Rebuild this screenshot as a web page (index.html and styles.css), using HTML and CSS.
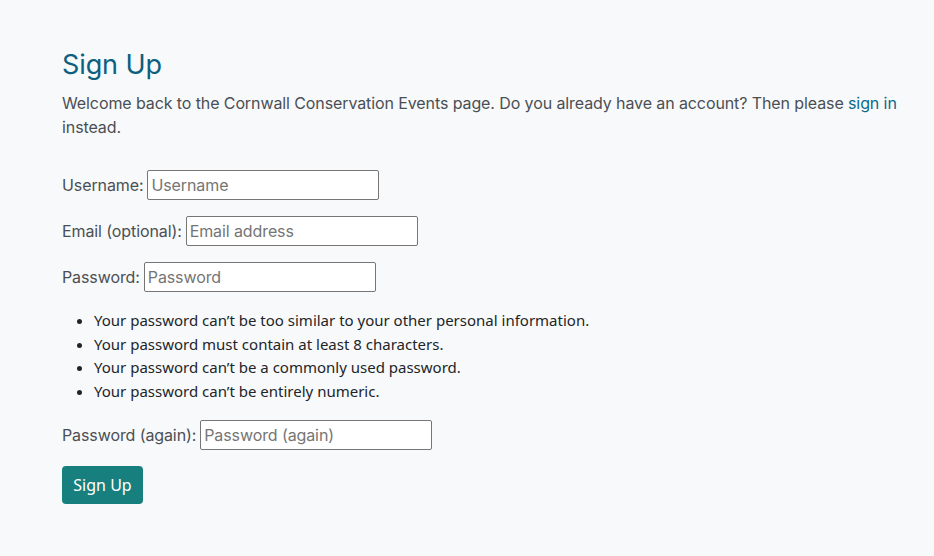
FILE: index.html
```html
<!DOCTYPE html>
<html lang="en">
<head>
<meta charset="utf-8">
<title>Sign Up</title>
<link rel="stylesheet" href="styles.css">
</head>
<body>
<main class="page">
  <h1 class="title">Sign Up</h1>
  <p class="intro">Welcome back to the Cornwall Conservation Events page. Do you already have an account? Then please <a class="link" href="#">sign in</a> instead.</p>
  <form class="signup">
    <p class="row"><label class="label" for="u">Username:</label> <input class="field" id="u" type="text" placeholder="Username"></p>
    <p class="row"><label class="label" for="e">Email (optional):</label> <input class="field" id="e" type="email" placeholder="Email address"></p>
    <p class="row"><label class="label" for="p1">Password:</label> <input class="field" id="p1" type="password" placeholder="Password"></p>
    <ul class="help">
      <li>Your password can’t be too similar to your other personal information.</li>
      <li>Your password must contain at least 8 characters.</li>
      <li>Your password can’t be a commonly used password.</li>
      <li>Your password can’t be entirely numeric.</li>
    </ul>
    <p class="row"><label class="label" for="p2">Password (again):</label> <input class="field" id="p2" type="password" placeholder="Password (again)"></p>
    <button class="btn" type="submit">Sign Up</button>
  </form>
</main>
</body>
</html>
```
FILE: styles.css
```css
html, body {
  margin: 0;
  padding: 0;
  background: #f8f9fa;
}
body {
  font-family: Inter, "Noto Sans", sans-serif;
  font-size: 16px;
  line-height: 24px;
  color: #4a4f55;
  letter-spacing: -0.1px;
}
.page {
  padding: 45px 20px 40px 62px;
  max-width: 860px;
}
.title {
  margin: 0 0 6px 0;
  font-size: 27px;
  line-height: 40px;
  font-weight: 400;
  color: #0c5f7f;
}
.intro {
  margin: 0 0 31px 0;
}
.link {
  color: #0a6a8c;
  text-decoration: none;
}
.signup {
  margin: 0;
}
.row {
  margin: 0 0 16px 0;
  height: 30px;
  display: flex;
  align-items: center;
  gap: 4px;
}
.label {
  color: #4a4f55;
}
.field {
  width: 232px;
  height: 30px;
  box-sizing: border-box;
  border: 1px solid #767676;
  border-radius: 2px;
  padding: 1px 3px;
  font-family: Inter, "Noto Sans", sans-serif;
  font-size: 16px;
  letter-spacing: -0.1px;
  color: #212529;
  background: #fff;
}
.field::placeholder {
  color: #757575;
}
.help {
  margin: 17px 0 16px 0;
  padding-left: 32px;
  font-family: "Noto Sans", "Open Sans", sans-serif;
  font-size: 15px;
  line-height: 23.7px;
  letter-spacing: 0;
  color: #212529;
}
.btn {
  display: block;
  margin-top: 16px;
  width: 81px;
  height: 38px;
  border: none;
  border-radius: 4px;
  background: #17807e;
  color: #fff;
  font-family: "Noto Sans", "Open Sans", sans-serif;
  font-size: 16px;
  letter-spacing: 0;
  padding: 0;
  cursor: pointer;
}
```
